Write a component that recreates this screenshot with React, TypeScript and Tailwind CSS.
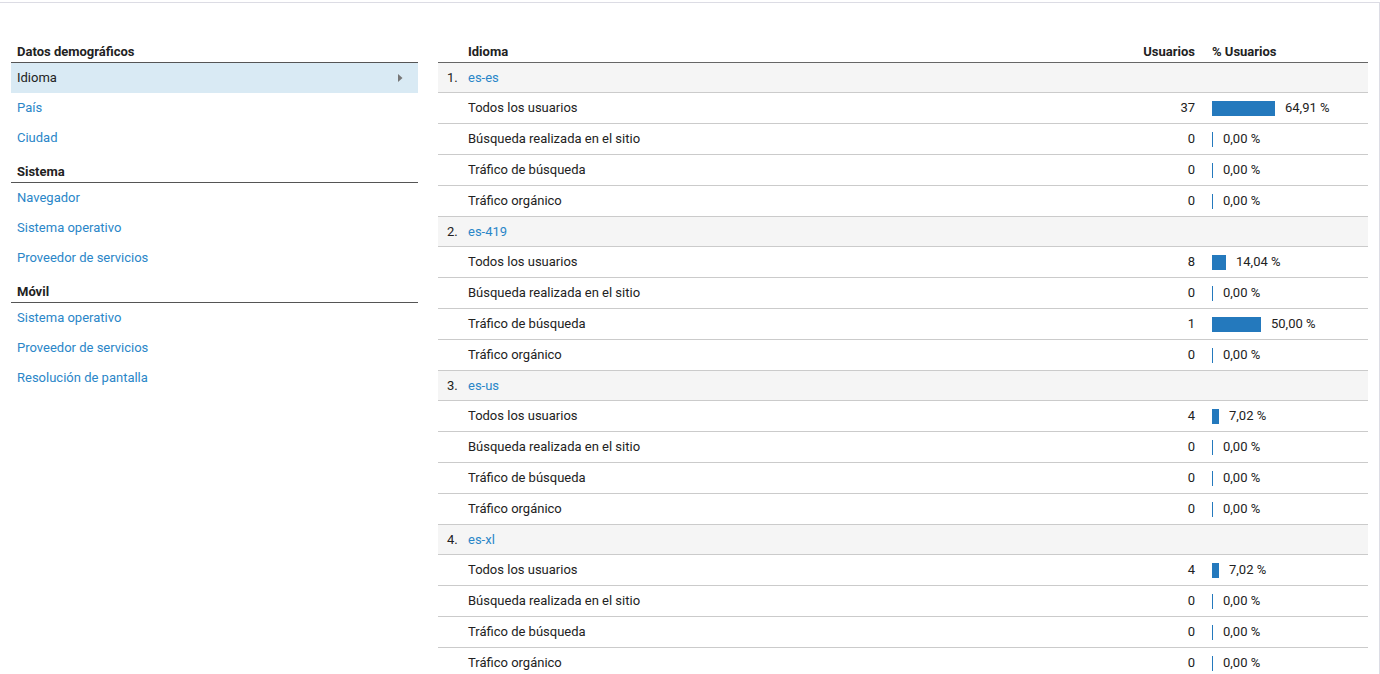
const FONT = { fontFamily: 'Roboto, "Liberation Sans", sans-serif' }

type Sub = { label: string; users: number; pct: number }
type Group = { key: string; subs: Sub[] }

const SUB_LABELS = [
  'Todos los usuarios',
  'Búsqueda realizada en el sitio',
  'Tráfico de búsqueda',
  'Tráfico orgánico',
]

function mk(values: [number, number][]): Sub[] {
  return values.map(([users, pct], i) => ({ label: SUB_LABELS[i], users, pct }))
}

const GROUPS: Group[] = [
  { key: 'es-es', subs: mk([[37, 64.91], [0, 0], [0, 0], [0, 0]]) },
  { key: 'es-419', subs: mk([[8, 14.04], [0, 0], [1, 50], [0, 0]]) },
  { key: 'es-us', subs: mk([[4, 7.02], [0, 0], [0, 0], [0, 0]]) },
  { key: 'es-xl', subs: mk([[4, 7.02], [0, 0], [0, 0], [0, 0]]) },
]

const MENU = [
  { title: 'Datos demográficos', items: ['Idioma', 'País', 'Ciudad'] },
  { title: 'Sistema', items: ['Navegador', 'Sistema operativo', 'Proveedor de servicios'] },
  { title: 'Móvil', items: ['Sistema operativo', 'Proveedor de servicios', 'Resolución de pantalla'] },
]

function fmt(p: number) {
  return p.toFixed(2).replace('.', ',') + ' %'
}

function Sidebar() {
  return (
    <div className="w-[407px] shrink-0">
      {MENU.map((sec, si) => (
        <div key={sec.title} className={si === 0 ? '' : 'mt-[7px]'}>
          <div className="h-[23px] flex items-center pt-[2px] px-[6px] border-b border-[#555] text-[13px] font-bold text-[#222]">
            {sec.title}
          </div>
          {sec.items.map((item, ii) => {
            const active = si === 0 && ii === 0
            return (
              <div
                key={item}
                className={
                  active
                    ? 'h-[30px] flex items-center justify-between px-[6px] bg-[#d9eaf4] text-[13px] text-[#222]'
                    : 'h-[30px] flex items-center px-[6px] text-[13px] text-[#2a86c8]'
                }
              >
                <span>{item}</span>
                {active && (
                  <svg width="5" height="8" viewBox="0 0 5 8" className="mr-[9px]">
                    <path d="M0 0 L4.5 4 L0 8 Z" fill="#777" />
                  </svg>
                )}
              </div>
            )
          })}
        </div>
      ))}
    </div>
  )
}

function Bar({ pct }: { pct: number }) {
  const w = Math.max(1, Math.round(pct * 0.97))
  return (
    <div className="flex items-center">
      <div className="h-[15px] bg-[#2479bd]" style={{ width: w }} />
      <span className="ml-[10px]">{fmt(pct)}</span>
    </div>
  )
}

function Table() {
  return (
    <div className="flex-1 min-w-0 text-[13px] text-[#222]">
      <div className="h-[23px] flex items-center pt-[2px] border-b border-[#666] font-bold">
        <div className="flex-1 pl-[30px]">Idioma</div>
        <div className="w-[120px] text-right">Usuarios</div>
        <div className="w-[173px] pl-[17px]">% Usuarios</div>
      </div>
      {GROUPS.map((g, gi) => (
        <div key={g.key}>
          <div className="h-[30px] flex items-center bg-[#f5f5f5] border-b border-[#cbcbcb]">
            <span className="w-[30px] pl-[9px]">{gi + 1}.</span>
            <span className="text-[#2a86c8]">{g.key}</span>
          </div>
          {g.subs.map((s) => (
            <div key={s.label} className="h-[31px] flex items-center border-b border-[#cbcbcb]">
              <div className="flex-1 pl-[30px]">{s.label}</div>
              <div className="w-[120px] text-right">{s.users}</div>
              <div className="w-[173px] pl-[17px]">
                <Bar pct={s.pct} />
              </div>
            </div>
          ))}
        </div>
      ))}
    </div>
  )
}

export default function App() {
  return (
    <div className="bg-white h-screen overflow-hidden" style={FONT}>
      <div className="mt-[2px] border-t border-r border-[#dcdce4] flex items-start pl-[11px] pr-[11px] pt-[37px] gap-[20px] h-[672px] overflow-hidden">
        <Sidebar />
        <Table />
      </div>
    </div>
  )
}
